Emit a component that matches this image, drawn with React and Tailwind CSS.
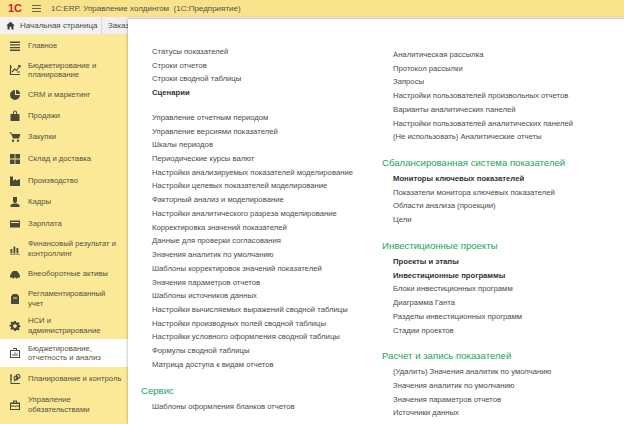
import React from "react";

const Icon = ({ children }) => (
  <svg width="12" height="12" viewBox="0 0 12 12" fill="#4a4a3c" className="shrink-0">
    {children}
  </svg>
);

const menu = [
  { label: ["Главное"], h: "h-[21px]", icon: <path d="M1 1.5h10v1.4H1zM1 4.2h10v1.4H1zM1 6.9h10v1.4H1zM1 9.6h10V11H1z" /> },
  { label: ["Бюджетирование и", "планирование"], h: "h-[28px]", icon: <path d="M1.5 1v9.5H11M3 8l2.5-3 2 1.5L10.5 2M9 1.5h2v2M1 3h2M8 8h3" fill="none" stroke="#4a4a3c" strokeWidth="1.2" /> },
  { label: ["CRM и маркетинг"], h: "h-[21px]", icon: <path d="M6 1a5 5 0 1 0 5 5H6zM7 0.8V5h4.2A4.6 4.6 0 0 0 7 .8z" /> },
  { label: ["Продажи"], h: "h-[21px]", icon: <path d="M1.5 4h9v7h-9zM4 4V2.5a2 2 0 0 1 4 0V4H7V2.5a1 1 0 0 0-2 0V4z" /> },
  { label: ["Закупки"], h: "h-[22px]", icon: <path d="M0.5 1.5h2l.5 1.5h8.5L10 7.5H4L2 2.5H.5zM4 8.5a1.2 1.2 0 1 0 .01 0zM9 8.5a1.2 1.2 0 1 0 .01 0z" /> },
  { label: ["Склад и доставка"], h: "h-[22px]", icon: <path d="M1 1h4.6v4.6H1zM6.4 1H11v4.6H6.4zM1 6.4h4.6V11H1zM6.4 6.4H11V11H6.4z" /> },
  { label: ["Производство"], h: "h-[21px]", icon: <path d="M1 1.5h3v4l3-1.5v1.5l4-1.5V11H1z" /> },
  { label: ["Кадры"], h: "h-[22px]", icon: <path d="M4 1h4v4a2 2 0 0 1-4 0zM1.5 11V9l2.5-1.5h4L10.500 9v2z" /> },
  { label: ["Зарплата"], h: "h-[22px]", icon: <path d="M1 2.500h10v7H1zM2 4v1h8V4z" fillRule="evenodd" /> },
  { label: ["Финансовый результат и", "контроллинг"], h: "h-[27px]", icon: <path d="M1.500 6h1.800v4.500H1.500zM4.500 3.500h1.800v7H4.500zM7.500 5h1.800v5.500H7.500zM1 11h10v.6H1z" /> },
  { label: ["Внеоборотные активы"], h: "h-[23px]", icon: <path d="M1 8l1-2.500L4 3h4l2 2.500L11 8v1.500H9a1.300 1.300 0 0 1-2.500 0h-1A1.300 1.300 0 0 1 3 9.500H1z" /> },
  { label: ["Регламентированный", "учет"], h: "h-[27px]", icon: <path d="M2 3.500L4 1h4l2 2v8H2zM4 4.500v1h4v-1z" fillRule="evenodd" /> },
  { label: ["НСИ и", "администрирование"], h: "h-[27px]", icon: <path d="M5 1h2l.3 1.400 1.200.5L9.700 2.100 11 3.500l-.8 1.200.4 1.100L12 6v1.500l-1.400.3-.4 1.100.8 1.200-1.300 1.300-1.200-.8-1.200.5L7 12H5l-.3-1.400-1.200-.5-1.200.8L1 9.500l.8-1.200-.4-1.100L0 7V5.500l1.400-.3.4-1.100L1 2.900 2.300 1.600l1.200.8 1.200-.5zM6 4.500a2 2 0 1 0 .01 0z" fillRule="evenodd" transform="scale(.92) translate(.5 0)" /> },
  { label: ["Бюджетирование,", "отчетность и анализ"], h: "h-[28px]", active: true, icon: <path d="M1 3h10v8H1zM4 1h4v2H7V2H5v1zM2 4v6h8V4zM3.500 7h1v2h-1zM5.500 5.500h1V9h-1zM7.500 6.500h1V9h-1z" fillRule="evenodd" /> },
  { label: ["Планирование и контроль"], h: "h-[23px]", icon: <path d="M2 1v9.500h9M1 3h2M1 6h2M5 8.500L9 4M7 3a2 2 0 1 0 .01 0M9 1.500a2 2 0 1 0 .01 0" fill="none" stroke="#4a4a3c" strokeWidth="1.100" /> },
  { label: ["Управление", "обязательствами"], h: "h-[29px]", icon: <path d="M1 3.500h10V11H1zM4 3.500V1.500h4v2H7V2.500H5v1zM2 5v1.500h3.500V7h1v-.5H10V5zM2 7.500V10h8V7.500H6.500V8h-1v-.5z" fillRule="evenodd" /> },
];

const colA = [
  { items: [["Статусы показателей"], ["Строки отчетов"], ["Строки сводной таблицы"], ["Сценарии", true]] },
  {
    items: [
      ["Управление отчетным периодом"],
      ["Управление версиями показателей"],
      ["Шкалы периодов"],
      ["Периодические курсы валют"],
      ["Настройки анализируемых показателей моделирование"],
      ["Настройки целевых показателей моделирование"],
      ["Факторный анализ и моделирование"],
      ["Настройки аналитического разреза моделирование"],
      ["Корректировка значений показателей"],
      ["Данные для проверки согласования"],
      ["Значения аналитик по умолчанию"],
      ["Шаблоны корректировок значений показателей"],
      ["Значения параметров отчетов"],
      ["Шаблоны источников данных"],
      ["Настройки вычисляемых выражений сводной таблицы"],
      ["Настройки производных полей сводной таблицы"],
      ["Настройки условного оформления сводной таблицы"],
      ["Формулы сводной таблицы"],
      ["Матрица доступа к видам отчетов"],
    ],
  },
  { title: "Сервис", items: [["Шаблоны оформления бланков отчетов"]] },
];

const colB = [
  {
    items: [
      ["Аналитическая рассылка"],
      ["Протокол рассылки"],
      ["Запросы"],
      ["Настройки пользователей произвольных отчетов"],
      ["Варианты аналитических панелей"],
      ["Настройки пользователей аналитических панелей"],
      ["(Не использовать) Аналитические отчеты"],
    ],
  },
  {
    title: "Сбалансированная система показателей",
    items: [["Мониторы ключевых показателей", true], ["Показатели монитора ключевых показателей"], ["Области анализа (проекции)"], ["Цели"]],
  },
  {
    title: "Инвестиционные проекты",
    items: [
      ["Проекты и этапы", true],
      ["Инвестиционные программы", true],
      ["Блоки инвестиционных программ"],
      ["Диаграмма Ганта"],
      ["Разделы инвестиционных программ"],
      ["Стадии проектов"],
    ],
  },
  {
    title: "Расчет и запись показателей",
    items: [["(Удалить) Значения аналитик по умолчанию"], ["Значения аналитик по умолчанию"], ["Значения параметров отчетов"], ["Источники данных"]],
  },
];

function Section({ title, items }) {
  return (
    <div className="mb-[11px]">
      {title && <div className="h-[16px] leading-[16px] text-[9.6px] text-[#1ba35c] mb-[1px]">{title}</div>}
      <div className="pl-[11px]">
        {items.map(([text, bold]) => (
          <div key={text} className={`h-[13.72px] leading-[13.72px] whitespace-nowrap ${bold ? "font-bold text-[#333]" : "text-[#4b4b4b]"}`}>
            {text}
          </div>
        ))}
      </div>
    </div>
  );
}

export default function App() {
  return (
    <div className="relative w-[624px] h-[424px] overflow-hidden bg-white text-[7.7px] font-['Liberation_Sans',Arial,sans-serif]">
      <div className="h-[17px] bg-[#f9e28c] flex items-center text-[#55523f] text-[8px]">
        <span className="w-[31px] pl-[8px] font-bold text-[#d2232a] text-[11px] leading-none">1C</span>
        <div className="w-[9px] h-[7px] border-y border-[#66634f] flex items-center ml-[1px] mr-[10px]">
          <div className="w-full h-px bg-[#66634f]" />
        </div>
        <span>1С:ERP. Управление холдингом&nbsp; (1С:Предприятие)</span>
      </div>
      <div className="h-[17px] bg-[#f0f0f0] flex items-center text-[#4b4b4b] text-[8px]">
        <div className="w-[102px] h-full flex items-center pl-[6px] gap-[5px] bg-[#f2f2f2] border-r border-[#d5d5d5]">
          <svg width="9" height="9" viewBox="0 0 10 10" fill="#3c3c3c">
            <path d="M5 .8L.3 5h1.400v4.500h2.300V6.500h2V9.500h2.300V5H9.700z" />
          </svg>
          <span>Начальная страница</span>
        </div>
        <span className="pl-[6px]">Заказ</span>
      </div>
      <div className="w-[128px] h-[390px] bg-[#fbe997] pt-[1px]">
        {menu.map((m) => (
          <div key={m.label[0]} className={`flex items-center pl-[9px] gap-[7px] text-[#55523f] ${m.h} ${m.active ? "bg-white" : ""}`}>
            <Icon>{m.icon}</Icon>
            <div className="leading-[9.2px]">
              {m.label.map((l) => (
                <div key={l} className="whitespace-nowrap">{l}</div>
              ))}
            </div>
          </div>
        ))}
      </div>
      {/* выпадающая панель раздела поверх вкладок */}
      <div className="absolute left-[128px] top-[19px] w-[496px] h-[405px] bg-white shadow-[0_0_3px_rgba(0,0,0,0.35)] flex">
        <div className="w-[254px] pl-[13px] pt-[26px] shrink-0">
          {colA.map((s, i) => (
            <Section key={i} {...s} />
          ))}
        </div>
        <div className="pt-[29px]">
          {colB.map((s, i) => (
            <Section key={i} {...s} />
          ))}
        </div>
      </div>
    </div>
  );
}
